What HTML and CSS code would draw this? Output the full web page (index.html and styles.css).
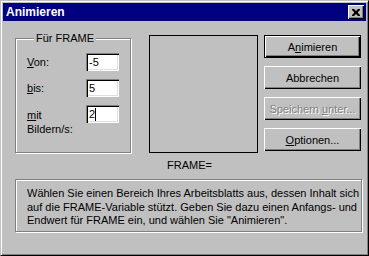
FILE: index.html
```html
<!DOCTYPE html>
<html lang="de">
<head>
    <meta charset="UTF-8">
    <title>Animieren</title>
    <link rel="stylesheet" href="styles.css">
</head>
<body>
    <div class="window">
        <div class="titlebar">
            <span class="title">Animieren</span>
            <div class="close">
                <svg width="8" height="7" viewBox="0 0 8 7">
                    <path d="M0 0h2l2 2 2-2h2v1l-2 2v1l2 2v1h-2l-2-2-2 2h-2v-1l2-2v-1l-2-2z" fill="#000"/>
                </svg>
            </div>
        </div>

        <div class="main">
            <!-- Frame range -->
            <div class="group">
                <span class="legend">Für FRAME</span>
                <div class="row">
                    <span class="label"><u>V</u>on:</span>
                    <div class="field">-5</div>
                </div>
                <div class="row">
                    <span class="label"><u>b</u>is:</span>
                    <div class="field">5</div>
                </div>
                <div class="row top">
                    <span class="label multi"><span><u>m</u>it</span><span>Bildern/s:</span></span>
                    <div class="field"><span>2</span><span class="caret"></span></div>
                </div>
            </div>

            <div class="preview-col">
                <div class="preview"></div>
                <div class="caption">FRAME=</div>
            </div>

            <div class="buttons">
                <button class="btn default">A<u>n</u>imieren</button>
                <button class="btn">Abbrechen</button>
                <button class="btn disabled">Speichern <u>u</u>nter...</button>
                <button class="btn"><u>O</u>ptionen...</button>
            </div>
        </div>

        <div class="info">
            Wählen Sie einen Bereich Ihres Arbeitsblatts aus, dessen Inhalt sich
            auf die FRAME-Variable stützt. Geben Sie dazu einen Anfangs- und
            Endwert für FRAME ein, und wählen Sie "Animieren".
        </div>
    </div>
</body>
</html>
```

FILE: styles.css
```css
body {
    margin: 0;
    font-family: "Liberation Sans", Arial, sans-serif;
    font-size: 11px;
    color: #000;
}
.window {
    width: 369px;
    height: 256px;
    box-sizing: border-box;
    background-color: #c0c0c0;
    border: 1px solid;
    border-color: #c0c0c0 #000 #000 #c0c0c0;
    box-shadow: inset 1px 1px 0 #fff, inset -1px -1px 0 #808080;
    padding: 2px;
}
.titlebar {
    height: 18px;
    background-color: #000080;
    display: flex;
    align-items: center;
    justify-content: space-between;
    padding-left: 3px;
}
.title {
    color: #fff;
    font-weight: bold;
    font-size: 12px;
}
.close {
    width: 16px;
    height: 14px;
    margin-right: 2px;
    box-sizing: border-box;
    background-color: #c0c0c0;
    box-shadow: inset 1px 1px 0 #fff, inset -1px -1px 0 #000, inset -2px -2px 0 #808080;
    display: flex;
    align-items: center;
    justify-content: center;
    padding-right: 1px;
}
.main {
    display: flex;
    align-items: flex-start;
    height: 158px;
}
.group {
    margin-top: 17px;
    margin-left: 12px;
    width: 116px;
    height: 115px;
    box-sizing: border-box;
    border: 1px solid #808080;
    box-shadow: 1px 1px 0 #fff, inset 1px 1px 0 #fff;
    padding: 2px 0 0 11px;
}
.legend {
    display: inline-block;
    margin: -9px 0 0 7px;
    padding: 0 2px;
    line-height: 13px;
    background-color: #c0c0c0;
    vertical-align: top;
}
.row {
    display: flex;
    align-items: center;
    margin-bottom: 8px;
}
.row.top {
    align-items: flex-start;
}
.label {
    width: 59px;
}
.multi {
    display: flex;
    flex-direction: column;
    line-height: 14px;
    margin-top: 3px;
}
.field {
    width: 33px;
    height: 18px;
    box-sizing: border-box;
    background-color: #fff;
    box-shadow: inset 1px 1px 0 #808080, inset 2px 2px 0 #000, inset -1px -1px 0 #fff, inset -2px -2px 0 #dfdfdf;
    padding: 1px 3px 0 3px;
    line-height: 17px;
    display: flex;
    align-items: center;
}
.caret {
    width: 1px;
    height: 13px;
    background-color: #000;
}
.preview-col {
    margin-left: 18px;
    margin-top: 14px;
}
.preview {
    width: 109px;
    height: 118px;
    box-sizing: border-box;
    border: 1px solid #000;
}
.caption {
    margin: 6px 0 0 18px;
    line-height: 13px;
}
.buttons {
    margin-left: 6px;
    margin-top: 14px;
    display: flex;
    flex-direction: column;
    gap: 8px;
}
.btn {
    width: 97px;
    height: 23px;
    box-sizing: border-box;
    border: none;
    padding: 0;
    background-color: #c0c0c0;
    font-family: "Liberation Sans", Arial, sans-serif;
    font-size: 11px;
    color: #000;
    box-shadow: inset 1px 1px 0 #fff, inset -1px -1px 0 #000, inset -2px -2px 0 #808080;
}
.btn.default {
    border: 1px solid #000;
}
.btn.disabled {
    color: #808080;
    text-shadow: 1px 1px 0 #fff;
}
.info {
    margin-left: 12px;
    width: 347px;
    height: 53px;
    box-sizing: border-box;
    border: 1px solid #808080;
    box-shadow: 1px 1px 0 #fff, inset 1px 1px 0 #fff;
    padding: 7px 0 0 11px;
    line-height: 13.5px;
}
```
